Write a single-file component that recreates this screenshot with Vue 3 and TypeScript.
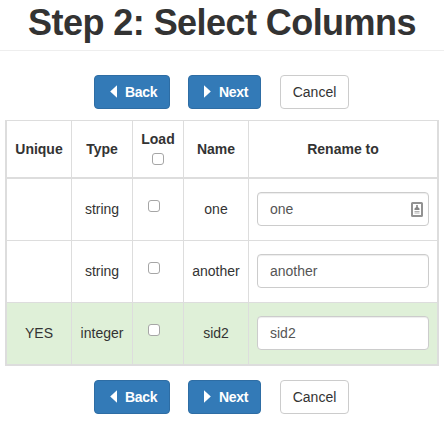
<script setup lang="ts">
import { ref } from 'vue'

interface Column {
  unique: boolean
  type: string
  name: string
  rename: string
  load: boolean
  contact?: boolean
}

const loadAll = ref(false)
const bars = ['top', 'bottom']
const columns = ref<Column[]>([
  { unique: false, type: 'string', name: 'one', rename: 'one', load: false, contact: true },
  { unique: false, type: 'string', name: 'another', rename: 'another', load: false },
  { unique: true, type: 'integer', name: 'sid2', rename: 'sid2', load: false },
])
</script>

<template>
  <main class="page">
    <h1 class="title"><span>Step 2: Select Columns</span></h1>
    <template v-for="bar in bars" :key="bar">
      <div class="actions" :class="bar">
        <button class="btn primary back" type="button">
          <svg class="caret" viewBox="0 0 7 13" width="7" height="13"><path d="M7 0.2V12.8L0.2 6.5Z" fill="#fff" /></svg>
          <span>Back</span>
        </button>
        <button class="btn primary next" type="button">
          <svg class="caret" viewBox="0 0 7 13" width="7" height="13"><path d="M0 0.2V12.8L6.8 6.5Z" fill="#fff" /></svg>
          <span>Next</span>
        </button>
        <button class="btn cancel" type="button">Cancel</button>
      </div>
      <table v-if="bar === 'top'" class="columns">
        <colgroup>
          <col class="c-unique" /><col class="c-type" /><col class="c-load" /><col class="c-name" /><col />
        </colgroup>
        <thead>
          <tr>
            <th>Unique</th>
            <th>Type</th>
            <th>
              <label class="load-all">Load<input v-model="loadAll" class="check" type="checkbox" /></label>
            </th>
            <th>Name</th>
            <th>Rename to</th>
          </tr>
        </thead>
        <tbody>
          <tr v-for="column in columns" :key="column.name" :class="{ success: column.unique }">
            <td>{{ column.unique ? 'YES' : '' }}</td>
            <td>{{ column.type }}</td>
            <td class="load"><input v-model="column.load" class="check" type="checkbox" /></td>
            <td>{{ column.name }}</td>
            <td class="rename">
              <div class="field">
                <input v-model="column.rename" type="text" />
                <svg v-if="column.contact" class="contact" viewBox="0 0 12 15" width="12" height="15">
                  <rect x="1" y="1" width="10" height="13" rx="0.5" fill="#fff" stroke="#929292" stroke-width="2" />
                  <path d="M5.2 3h1.6v2L8.5 6.5V8h-5V6.5L5.2 5Z" fill="#858585" />
                  <path d="M3.5 9.5h5M3.5 11h5" stroke="#b0b0b0" />
                </svg>
              </div>
            </td>
          </tr>
        </tbody>
      </table>
    </template>
  </main>
</template>

<style>
body {
  background: #fff;
  overflow: hidden;
}
</style>

<style scoped>
.page,
.page * {
  box-sizing: border-box;
}
.page {
  height: 423px;
  font: 14px/20px 'Liberation Sans', Arial, sans-serif;
  color: #333;
}
.title {
  height: 51px;
  margin: 0;
  padding-top: 3px;
  border-bottom: 1px solid #eee;
  font-size: 36px;
  line-height: 40px;
  font-weight: 700;
  letter-spacing: -0.56px;
  text-align: center;
  white-space: nowrap;
}
.actions {
  display: flex;
  padding-left: 94px;
}
.top {
  margin-top: 24px;
}
.bottom {
  margin-top: 14px;
}
.btn {
  display: flex;
  align-items: center;
  justify-content: center;
  height: 34px;
  padding: 0;
  border: 1px solid #ccc;
  border-radius: 4px;
  background: #fff;
  color: #333;
  font: inherit;
}
.primary {
  justify-content: flex-start;
  padding-left: 15px;
  border-color: #2e6da4;
  background: #337ab7;
  color: #fff;
  font-weight: 700;
  letter-spacing: -0.3px;
}
.caret {
  margin-right: 8px;
  margin-top: -2px;
}
.back {
  width: 76px;
}
.next {
  width: 73px;
  margin-left: 18px;
}
.cancel {
  width: 69px;
  margin-left: 19px;
}
.columns {
  width: 434px;
  margin: 11px 0 0 5px;
  table-layout: fixed;
  border-collapse: separate;
  border-spacing: 0;
  border: 2px solid #ddd;
  border-top-width: 1px;
}
.c-unique,
.c-name {
  width: 65px;
}
.c-type {
  width: 61px;
}
.c-load {
  width: 51px;
}
th,
td {
  padding: 0;
  text-align: center;
  vertical-align: middle;
  border-right: 1px solid #ddd;
}
th:last-child,
td:last-child {
  border-right: 0;
}
th {
  height: 58px;
  border-bottom: 2px solid #ddd;
}
td {
  height: 62px;
  padding-bottom: 1px;
  border-bottom: 1px solid #ddd;
}
tbody tr:last-child td {
  height: 61px;
  border-bottom: 0;
}
.success td {
  background: #dff0d8;
}
.load-all {
  display: flex;
  flex-direction: column;
  align-items: center;
}
.check {
  appearance: none;
  display: block;
  width: 12px;
  height: 12px;
  margin: 0;
  border: 1px solid #a6a6a6;
  border-radius: 3px;
  background: #fff;
}
.check:checked {
  background: #337ab7;
}
.load-all .check {
  margin: 4px 1px 5px 0;
}
.load {
  padding: 0 0 7px 15px;
}
.rename {
  padding: 0 8px 1px;
}
.field {
  display: flex;
  align-items: center;
  justify-content: space-between;
  height: 34px;
  padding: 0 5px 0 12px;
  border: 1px solid #ccc;
  border-radius: 4px;
  background: #fff;
  box-shadow: inset 0 1px 1px rgba(0, 0, 0, 0.075);
}
.field input {
  flex: 1;
  min-width: 0;
  padding: 0;
  border: 0;
  outline: 0;
  background: transparent;
  color: #555;
  font: inherit;
}
</style>
